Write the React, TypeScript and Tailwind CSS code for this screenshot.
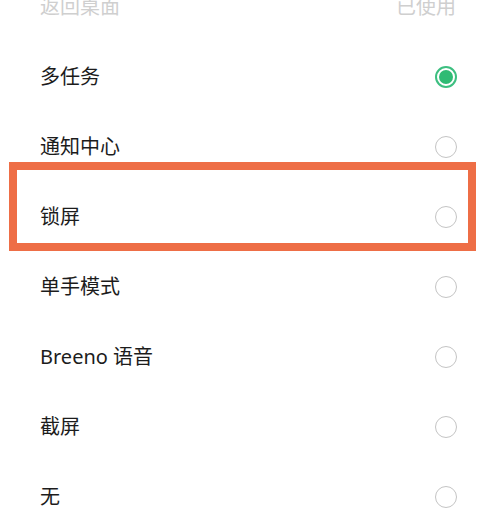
import React from "react";

const rows = [
  { label: "多任务", checked: true },
  { label: "通知中心" },
  { label: "锁屏", marked: true },
  { label: "单手模式" },
  { label: "Breeno 语音" },
  { label: "截屏" },
  { label: "无" },
];

const Radio = ({ checked }: { checked?: boolean }) =>
  checked ? (
    <div className="flex h-[22px] w-[22px] items-center justify-center rounded-full border-[2px] border-[#3dbf80] bg-white">
      <div className="h-[14px] w-[14px] rounded-full bg-[#2fbb74]" />
    </div>
  ) : (
    <div className="h-[22px] w-[22px] rounded-full border-[1.5px] border-[#c4c4c4] bg-white" />
  );

const App = () => {
  return (
    <div
      className="h-[526px] w-[500px] overflow-hidden bg-white"
      style={{ fontFamily: '"Noto Sans", "Noto Sans CJK SC", sans-serif' }}
    >
      <div className="-mt-[28px]">
        <div className="flex h-[70px] items-center justify-between pl-[40px] pr-[44px] text-[20px] text-[#cfcfcf]">
          <span>返回桌面</span>
          <span>已使用</span>
        </div>
        {rows.map((r) => (
          <div
            key={r.label}
            className="relative flex h-[70px] items-center justify-between pl-[40px] pr-[43px] text-[20px] text-[#1c1c1c]"
          >
            <span>{r.label}</span>
            <Radio checked={r.checked} />
            {r.marked && (
              <div className="pointer-events-none absolute -top-[20px] bottom-[1px] left-[9px] right-[24px] border-[8px] border-[#ee6e46]" />
            )}
          </div>
        ))}
      </div>
    </div>
  );
};

export default App;
